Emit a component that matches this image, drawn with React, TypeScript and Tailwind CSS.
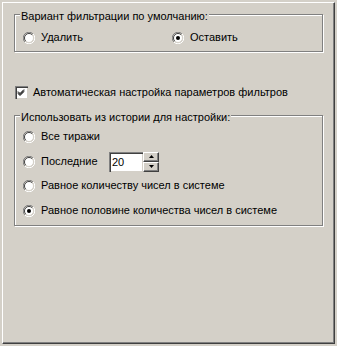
import React from "react";

const font = { fontFamily: '"Liberation Sans", Arial, sans-serif' };

const Radio = ({ checked }: { checked?: boolean }) => (
  <svg width="12" height="12" viewBox="0 0 12 12" className="shrink-0">
    <circle cx="6" cy="6" r="4.5" fill="#fff" />
    <path d="M1.9 10.1 A5.5 5.5 0 0 1 10.1 1.9" fill="none" stroke="#808080" />
    <path d="M10.1 1.9 A5.5 5.5 0 0 1 1.9 10.1" fill="none" stroke="#fff" />
    <path d="M2.8 9.2 A4.5 4.5 0 0 1 9.2 2.8" fill="none" stroke="#404040" />
    <path d="M9.2 2.8 A4.5 4.5 0 0 1 2.8 9.2" fill="none" stroke="#d4d0c8" />
    {checked && <circle cx="6" cy="6" r="2" fill="#000" />}
  </svg>
);

const Check = () => (
  <div className="h-[13px] w-[13px] shrink-0 border-t border-l border-[#808080] border-r-white border-b-white bg-white shadow-[inset_1px_1px_0_#404040,inset_-1px_-1px_0_#d4d0c8]">
    <svg width="11" height="11" viewBox="0 0 11 11">
      <path d="M2 4.5 L4 6.5 L8 2.5 M2 5.5 L4 7.5 L8 3.5 M2 6.5 L4 8.5 L8 4.5" fill="none" stroke="#000" strokeWidth="1" />
    </svg>
  </div>
);

const Group = ({ title, h, children }: { title: string; h: string; children: React.ReactNode }) => (
  <div className={`relative ml-[11px] w-[309px] ${h} border border-[#808080] shadow-[1px_1px_0_#fff,inset_1px_1px_0_#fff]`}>
    <span className="absolute left-[5px] top-[-5px] bg-[#d4d0c8] px-[1px] leading-[13px]">{title}</span>
    {children}
  </div>
);

export default function App() {
  return (
    <div className="h-[346px] w-[337px] bg-[#d4d0c8] pl-[2px] pt-[2px] text-[11px] text-black" style={font}>
      <div className="h-[342px] w-[333px] border-t border-l border-white border-r border-b border-r-[#404040] border-b-[#404040] shadow-[inset_-1px_-1px_0_#808080]">
        <div className="pt-[11px]">
          <Group title="Вариант фильтрации по умолчанию:" h="h-[38px]">
            <div className="mt-[16px] flex h-[13px] items-center pl-[8px] leading-[13px]">
              <div className="flex w-[149px] items-center">
                <Radio />
                <span className="ml-[6px]">Удалить</span>
              </div>
              <div className="flex items-center">
                <Radio checked />
                <span className="ml-[6px]">Оставить</span>
              </div>
            </div>
          </Group>
        </div>

        <div className="ml-[12px] mt-[34px] flex h-[13px] items-center leading-[13px]">
          <Check />
          <span className="ml-[5px]">Автоматическая настройка параметров фильтров</span>
        </div>

        <div className="mt-[16px]">
          <Group title="Использовать из истории для настройки:" h="h-[111px]">
            <div className="pl-[8px] leading-[13px]">
              <div className="mt-[14px] flex h-[13px] items-center">
                <Radio />
                <span className="ml-[6px]">Все тиражи</span>
              </div>
              <div className="mt-[12px] flex h-[13px] items-center">
                <Radio />
                <span className="ml-[6px] w-[68px]">Последние</span>
                <div className="flex h-[20px] items-stretch">
                  <div className="flex w-[34px] items-center border-t border-l border-[#808080] border-r-white border-b-white bg-white pl-[2px] shadow-[inset_1px_1px_0_#404040,inset_-1px_-1px_0_#d4d0c8]">
                    20
                  </div>
                  <div className="flex w-[16px] flex-col">
                    <div className="flex flex-1 items-center justify-center border-t border-l border-white border-r border-b border-r-[#404040] border-b-[#404040] shadow-[inset_-1px_-1px_0_#808080]">
                      <svg width="5" height="3" viewBox="0 0 5 3"><path d="M2.5 0 L5 3 L0 3 Z" fill="#000" /></svg>
                    </div>
                    <div className="flex flex-1 items-center justify-center border-t border-l border-white border-r border-b border-r-[#404040] border-b-[#404040] shadow-[inset_-1px_-1px_0_#808080]">
                      <svg width="5" height="3" viewBox="0 0 5 3"><path d="M0 0 L5 0 L2.5 3 Z" fill="#000" /></svg>
                    </div>
                  </div>
                </div>
              </div>
              <div className="mt-[11px] flex h-[13px] items-center">
                <Radio />
                <span className="ml-[6px]">Равное количеству чисел в системе</span>
              </div>
              <div className="mt-[12px] flex h-[13px] items-center">
                <Radio checked />
                <span className="ml-[6px]">Равное половине количества чисел в системе</span>
              </div>
            </div>
          </Group>
        </div>
      </div>
    </div>
  );
}
